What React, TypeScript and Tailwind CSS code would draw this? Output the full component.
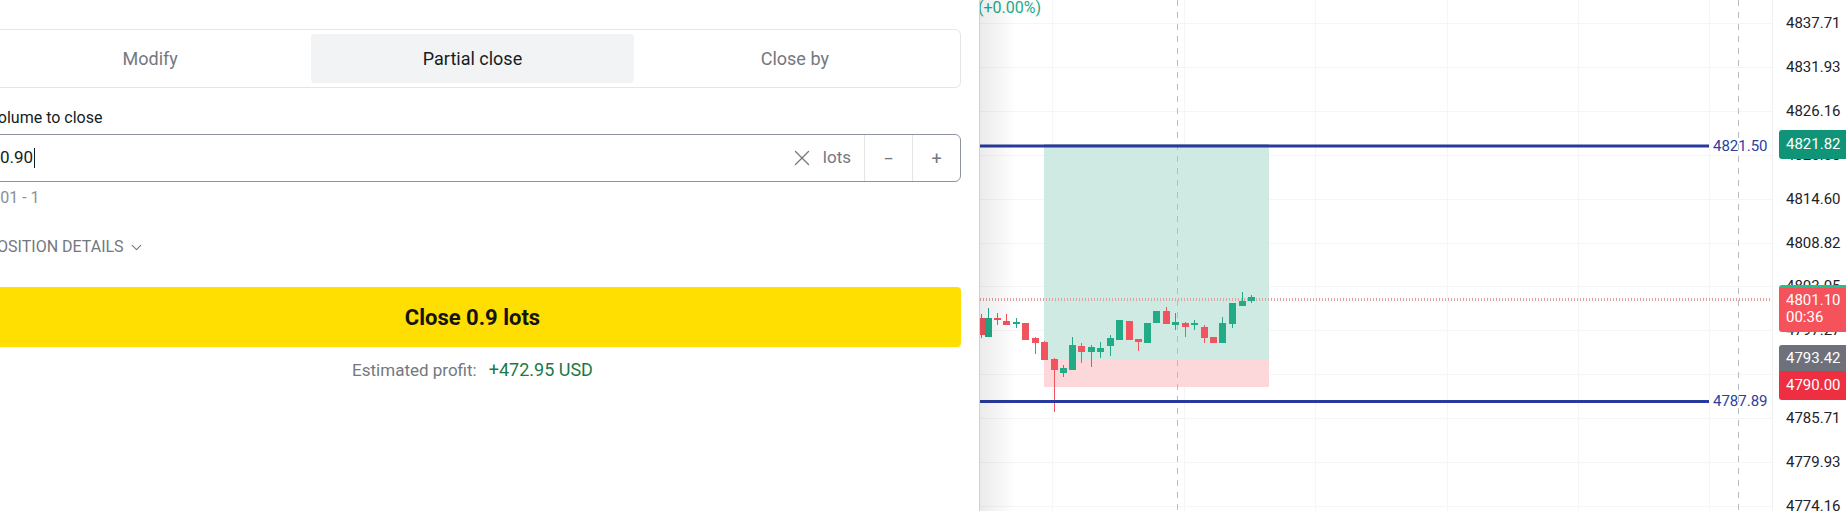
import { X, ChevronDown } from "lucide-react";

const PRICES = [
  "4837.71",
  "4831.93",
  "4826.16",
  "4820.38",
  "4814.60",
  "4808.82",
  "4803.05",
  "4797.27",
  "4791.49",
  "4785.71",
  "4779.93",
  "4774.16",
];

// price -> y on the chart
const py = (p: number) => 23 + (4837.71 - p) * 7.6;

// x, bodyTop, bodyBottom, wickTop, wickBottom, up  (page coords)
const CANDLES: [number, number, number, number, number, boolean][] = [
  [981, 318, 335, 314, 338, false],
  [988, 318, 337, 308, 337, true],
  [997, 318, 320, 313, 325, false],
  [1006, 321, 325, 314, 325, false],
  [1016, 322, 324, 318, 328, true],
  [1025, 323, 340, 323, 340, false],
  [1035, 338, 343, 337, 354, false],
  [1044, 342, 360, 341, 360, false],
  [1054, 359, 370, 358, 412, false],
  [1063, 368, 373, 365, 377, true],
  [1072, 345, 370, 337, 370, true],
  [1081, 346, 352, 343, 363, false],
  [1091, 347, 352, 345, 367, true],
  [1100, 348, 352, 342, 358, true],
  [1110, 338, 346, 335, 356, true],
  [1119, 320, 340, 320, 340, true],
  [1129, 321, 340, 321, 340, false],
  [1138, 339, 342, 339, 351, false],
  [1147, 323, 343, 323, 343, true],
  [1156, 311, 323, 311, 323, true],
  [1166, 311, 324, 307, 324, false],
  [1175, 322, 325, 313, 330, true],
  [1185, 323, 327, 322, 337, false],
  [1194, 323, 325, 320, 330, true],
  [1204, 327, 338, 325, 343, false],
  [1213, 337, 343, 337, 343, false],
  [1222, 323, 343, 317, 343, true],
  [1232, 303, 324, 303, 328, true],
  [1242, 301, 306, 292, 306, true],
  [1251, 297, 301, 295, 303, true],
];

const GREEN = "#22ab87";
const RED = "#f0545e";
const LINE_BLUE = "#283a9c";

const OrderPanel = () => {
  return (
    <div className="relative z-10 h-full w-[980px] shrink-0 overflow-hidden border-r border-[#cfd1d4] bg-white font-['Roboto',sans-serif]">
      <div className="ml-[-16px] flex w-[977px] flex-col pt-[29px]">
        {/* Tabs */}
        <div className="flex h-[59px] rounded-md border border-[#e3e5e8] p-[4px]">
          <div className="flex flex-1 items-center justify-center text-[18px] text-[#737880]">
            Modify
          </div>
          <div className="flex flex-1 items-center justify-center rounded-[4px] bg-[#f2f3f5] text-[18px] text-[#141d22]">
            Partial close
          </div>
          <div className="flex flex-1 items-center justify-center text-[18px] text-[#737880]">
            Close by
          </div>
        </div>

        <div className="mt-[20px] pl-[4px] text-[16px] leading-5 text-[#141d22]">
          Volume to close
        </div>

        {/* Volume input */}
        <div className="mt-[6px] flex h-[48px] items-stretch rounded-md border border-[#8e949c]">
          <div className="flex flex-1 items-center pl-[15px] text-[17px] text-[#141d22]">
            0.90
            <span className="ml-px h-[20px] w-px bg-[#141d22]" />
          </div>
          <div className="flex items-center pr-[13px] text-[#737880]">
            <X size={26} strokeWidth={1.2} />
            <span className="ml-[8px] text-[17px]">lots</span>
          </div>
          <div className="flex w-[48px] items-center justify-center border-l border-[#e3e5e8] text-[18px] text-[#737880]">
            −
          </div>
          <div className="flex w-[48px] items-center justify-center border-l border-[#e3e5e8] text-[18px] text-[#737880]">
            +
          </div>
        </div>

        <div className="mt-[6px] pl-[3px] text-[16px] leading-5 text-[#8a8f96]">
          0.01 - 1
        </div>

        <div className="mt-[29px] flex items-center gap-[4px] pl-[3px] text-[16px] leading-5 text-[#737880]">
          POSITION DETAILS
          <ChevronDown size={17} strokeWidth={1.6} />
        </div>

        {/* Submit */}
        <button className="mt-[30px] flex h-[60px] items-center justify-center rounded-[4px] bg-[#ffde02] text-[22px] font-bold text-[#141414]">
          Close 0.9 lots
        </button>

        <div className="mt-[11px] flex items-center justify-center gap-[12px] leading-6">
          <span className="text-[17px] text-[#737880]">Estimated profit:</span>
          <span className="text-[18px] text-[#1b7a46]">+472.95 USD</span>
        </div>
      </div>
    </div>
  );
};

const Chart = () => {
  const vGrid = [72, 204, 335, 467, 598, 729];
  return (
    <div className="relative flex h-full flex-1 overflow-hidden bg-white font-['Roboto',sans-serif]">
      {/* plot */}
      <div className="relative h-full w-[792px] shrink-0">
        <svg width={792} height={511} className="absolute left-0 top-0">
          {PRICES.map((p) => (
            <line
              key={p}
              x1={0}
              x2={792}
              y1={Math.round(py(parseFloat(p))) + 0.5}
              y2={Math.round(py(parseFloat(p))) + 0.5}
              stroke="#f4f5f7"
            />
          ))}
          {vGrid.map((x) => (
            <line key={x} x1={x + 0.5} x2={x + 0.5} y1={0} y2={511} stroke="#f4f5f7" />
          ))}

          {/* position box */}
          <rect x={64} y={144} width={225} height={215} fill="#cfeae3" />
          <rect x={64} y={359} width={225} height={28} fill="#fcd8db" />
          <line x1={64} x2={289} y1={144.5} y2={144.5} stroke="#c3c8cc" />

          {/* dashed verticals */}
          <line x1={197.5} x2={197.5} y1={0} y2={511} stroke="#b9bcc3" strokeDasharray="6 6" />
          <line x1={758.5} x2={758.5} y1={0} y2={511} stroke="#b9bcc3" strokeDasharray="6 6" />

          {/* current price */}
          <line x1={0} x2={792} y1={299.5} y2={299.5} stroke="#dfa4a0" strokeWidth={3} strokeDasharray="1 2" />

          {/* candles */}
          {CANDLES.map(([x, bt, bb, wt, wb, up], i) => {
            const cx = x - 980;
            const color = up ? GREEN : RED;
            return (
              <g key={i}>
                <line x1={cx + 0.5} x2={cx + 0.5} y1={wt} y2={wb} stroke={color} />
                <rect x={cx - 3} y={bt} width={7} height={Math.max(bb - bt, 2)} fill={color} />
              </g>
            );
          })}

          {/* TP / SL lines */}
          <line x1={0} x2={729} y1={146} y2={146} stroke={LINE_BLUE} strokeWidth={3} />
          <line x1={0} x2={729} y1={401.5} y2={401.5} stroke={LINE_BLUE} strokeWidth={3} />
        </svg>

        <div className="absolute left-[733px] top-[136px] text-[15px] leading-5 text-[#2c3e9e]">
          4821.50
        </div>
        <div className="absolute left-[733px] top-[391px] text-[15px] leading-5 text-[#2c3e9e]">
          4787.89
        </div>

        <div className="absolute left-[-2px] top-[-2px] text-[16px] leading-5 text-[#22ab87]">
          (+0.00%)
        </div>

        {/* panel shadow */}
        <div className="absolute left-0 top-0 h-full w-[36px] bg-linear-to-r from-black/[0.08] to-transparent" />
      </div>

      {/* price scale */}
      <div className="relative h-full flex-1 border-l border-[#eef0f3]">
        {PRICES.map((p) => (
          <div
            key={p}
            className="absolute left-[13px] text-[15px] leading-5 text-[#1e2229]"
            style={{ top: py(parseFloat(p)) - 10 }}
          >
            {p}
          </div>
        ))}

        <div className="absolute left-[6px] top-[130px] flex h-[29px] w-[80px] items-center rounded-l-[3px] bg-[#0f9478] pl-[7px] text-[15px] text-white">
          4821.82
        </div>

        <div className="absolute left-[6px] top-[285px] h-[3px] w-[80px] rounded-tl-[3px] bg-[#22c08a]" />
        <div className="absolute left-[6px] top-[288px] flex h-[44px] w-[80px] flex-col rounded-bl-[3px] bg-[#f5525c] pl-[7px] pt-[4px] text-[15px] leading-[17px] text-white">
          <span>4801.10</span>
          <span>00:36</span>
        </div>

        <div className="absolute left-[6px] top-[345px] flex h-[26px] w-[80px] items-center rounded-tl-[3px] bg-[#6e717a] pl-[7px] text-[15px] text-white">
          4793.42
        </div>
        <div className="absolute left-[6px] top-[371px] flex h-[29px] w-[80px] items-center rounded-bl-[3px] bg-[#ee2f42] pl-[7px] text-[15px] text-white">
          4790.00
        </div>
      </div>
    </div>
  );
}

export default function App() {
  return (
    <div className="flex h-[511px] w-[1846px] overflow-hidden bg-white">
      <OrderPanel />
      <Chart />
    </div>
  );
}
